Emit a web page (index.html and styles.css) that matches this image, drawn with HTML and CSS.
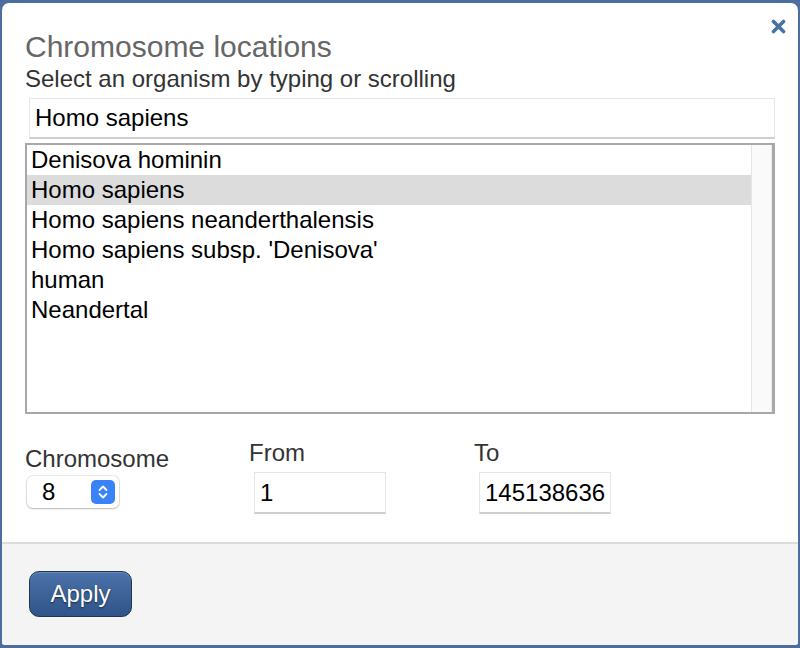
FILE: index.html
```html
<!DOCTYPE html>
<html lang="en">
<head>
<meta charset="utf-8">
<title>Chromosome locations</title>
<link rel="stylesheet" href="styles.css">
</head>
<body>
<div class="dialog">
  <button class="close" aria-label="Close">
    <svg width="15" height="15" viewBox="0 0 15 15"><path d="M2.5 2.5 L12.5 12.5 M12.5 2.5 L2.5 12.5" stroke="#4a72a6" stroke-width="3.6" stroke-linecap="round"/></svg>
  </button>
  <div class="content">
    <h1 class="title">Chromosome locations</h1>
    <p class="subtitle">Select an organism by typing or scrolling</p>
    <div class="search">Homo sapiens</div>
    <div class="listbox">
      <ul class="options">
        <li class="option">Denisova hominin</li>
        <li class="option selected">Homo sapiens</li>
        <li class="option">Homo sapiens neanderthalensis</li>
        <li class="option">Homo sapiens subsp. 'Denisova'</li>
        <li class="option">human</li>
        <li class="option">Neandertal</li>
      </ul>
      <div class="scrollbar"></div>
    </div>
    <div class="fields">
      <div class="field field-chrom">
        <div class="label">Chromosome</div>
        <div class="select">
          <span class="select-value">8</span>
          <span class="stepper">
            <svg width="24" height="24" viewBox="0 0 24 24"><path d="M8.5 10 L12 6.5 L15.5 10 M8.5 14 L12 17.5 L15.5 14" fill="none" stroke="#fff" stroke-width="1.8" stroke-linecap="round" stroke-linejoin="round"/></svg>
          </span>
        </div>
      </div>
      <div class="field">
        <div class="label">From</div>
        <div class="num-input">1</div>
      </div>
      <div class="field">
        <div class="label">To</div>
        <div class="num-input">145138636</div>
      </div>
    </div>
  </div>
  <div class="footer">
    <button class="apply">Apply</button>
  </div>
</div>
</body>
</html>
```

FILE: styles.css
```css
* { box-sizing: border-box; }
html, body {
  margin: 0;
  padding: 0;
}
body {
  background: #4b6e9e;
  font-family: "Liberation Sans", Arial, Helvetica, sans-serif;
  width: 800px;
  height: 648px;
  padding: 3px 2px 3px 2px;
  overflow: hidden;
}
.dialog {
  position: relative;
  width: 796px;
  height: 642px;
  background: #fff;
  border-radius: 7px 7px 3px 3px;
  overflow: hidden;
  display: flex;
  flex-direction: column;
}
.close {
  position: absolute;
  top: 14px;
  right: 11px;
  width: 18px;
  height: 18px;
  padding: 1px;
  border: 0;
  background: transparent;
  display: flex;
  align-items: center;
  justify-content: center;
}
.content {
  flex: 1;
  padding: 27px 0 0 23px;
}
.title {
  margin: 0;
  font-size: 30px;
  line-height: 34px;
  font-weight: normal;
  color: #666;
}
.subtitle {
  margin: 1px 0 0;
  font-size: 24px;
  line-height: 28px;
  color: #333;
}
.search {
  margin: 5px 0 0 4px;
  width: 746px;
  height: 41px;
  border: 1px solid #e6e6e6;
  border-bottom: 2px solid #cfcfcf;
  font-size: 24px;
  line-height: 38px;
  padding-left: 5px;
  color: #000;
}
.listbox {
  margin-top: 4px;
  width: 750px;
  height: 271px;
  border: 2px solid #a8a8a8;
  border-right-width: 3px;
  display: flex;
}
.options {
  list-style: none;
  margin: 0;
  padding: 0;
  flex: 1;
}
.option {
  height: 30px;
  line-height: 30px;
  font-size: 24px;
  padding-left: 4px;
  color: #000;
  white-space: nowrap;
}
.option.selected {
  background: #dcdcdc;
}
.scrollbar {
  width: 21px;
  background: #fafafa;
  border-left: 1px solid #e6e6e6;
  border-right: 1px solid #ececec;
}
.fields {
  margin-top: 25px;
  display: grid;
  grid-template-columns: 224px 225px 200px;
}
.label {
  font-size: 24px;
  line-height: 28px;
  color: #333;
}
.field-chrom .label {
  margin-top: 6px;
}
.select {
  margin: 3px 0 0 2px;
  width: 92px;
  height: 32px;
  border-radius: 6px;
  background: #fff;
  box-shadow: 0 0 0 1px rgba(0,0,0,0.08), 0 1px 2px rgba(0,0,0,0.22);
  display: flex;
  align-items: center;
  justify-content: space-between;
  padding: 0 4px 0 15px;
}
.select-value {
  font-size: 24px;
  color: #000;
}
.stepper {
  width: 24px;
  height: 24px;
  border-radius: 5px;
  background: #3a82f7;
  display: flex;
}
.field .num-input {
  margin: 5px 0 0 5px;
  width: 132px;
  height: 42px;
  border: 1px solid #e6e6e6;
  border-bottom: 2px solid #cfcfcf;
  font-size: 24px;
  line-height: 39px;
  padding-left: 5px;
  color: #000;
  white-space: nowrap;
  overflow: hidden;
}
.footer {
  height: 103px;
  background: #f4f4f4;
  border-top: 2px solid #dcdcdc;
  padding: 27px 0 0 27px;
}
.apply {
  width: 103px;
  height: 46px;
  border: 1px solid #1e3553;
  border-radius: 10px;
  background: linear-gradient(#4b72a9, #2f5489);
  box-shadow: inset 0 1px 0 rgba(255,255,255,0.18);
  color: #fff;
  font-family: "Liberation Sans", Arial, Helvetica, sans-serif;
  font-size: 24px;
  text-shadow: 0 1px 2px rgba(0,0,0,0.6);
  padding: 0;
}
```
